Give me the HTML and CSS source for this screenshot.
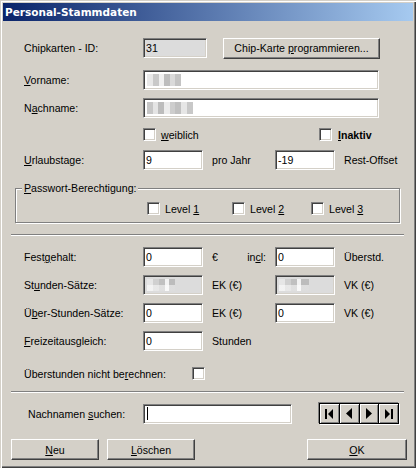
FILE: index.html
```html
<!DOCTYPE html>
<html>
<head>
<meta charset="utf-8">
<link rel="stylesheet" href="styles.css">
</head>
<body>
<div class="window">
  <div class="titlebar">Personal-Stammdaten</div>
  <div class="client">
    <div class="row r-chip">
      <span class="lbl">Chipkarten - ID:</span>
      <div class="field disabled w64">31</div>
      <button class="btn btn-chip">Chip-Karte <u>p</u>rogrammieren...</button>
    </div>
    <div class="row r-vor">
      <span class="lbl"><u>V</u>orname:</span>
      <div class="field w236"><span class="mosaic m-vor"></span></div>
    </div>
    <div class="row r-nach">
      <span class="lbl">N<u>a</u>chname:</span>
      <div class="field w236"><span class="mosaic m-nach"></span></div>
    </div>
    <div class="row r-check">
      <span class="lbl"></span>
      <div class="chk chk-weib"><span class="cb"></span><span><u>w</u>eiblich</span></div>
      <div class="chk"><span class="cb"></span><b><u>I</u>naktiv</b></div>
    </div>
    <div class="row r-url">
      <span class="lbl"><u>U</u>rlaubstage:</span>
      <div class="field w60">9</div>
      <div class="unit">pro Jahr</div>
      <div class="field w60">-19</div>
      <div class="unit2">Rest-Offset</div>
    </div>
    <fieldset class="group">
      <legend><u>P</u>asswort-Berechtigung:</legend>
      <div class="levels">
        <div class="chk lv1"><span class="cb"></span><span>Level <u>1</u></span></div>
        <div class="chk lv2"><span class="cb"></span><span>Level <u>2</u></span></div>
        <div class="chk"><span class="cb"></span><span>Level <u>3</u></span></div>
      </div>
    </fieldset>
    <div class="sep sep1"></div>
    <div class="row r-fest">
      <span class="lbl">Fest<u>g</u>ehalt:</span>
      <div class="field w60">0</div>
      <div class="unit split"><span>€</span><span>in<u>c</u>l:</span></div>
      <div class="field w60">0</div>
      <div class="unit2">Überstd.</div>
    </div>
    <div class="row r-std">
      <span class="lbl">St<u>u</u>nden-Sätze:</span>
      <div class="field w60 disabled"><span class="mosaic m-ek"></span></div>
      <div class="unit">EK (€)</div>
      <div class="field w60 disabled"><span class="mosaic m-vk"></span></div>
      <div class="unit2">VK (€)</div>
    </div>
    <div class="row r-ueb">
      <span class="lbl">Ü<u>b</u>er-Stunden-Sätze:</span>
      <div class="field w60">0</div>
      <div class="unit">EK (€)</div>
      <div class="field w60">0</div>
      <div class="unit2">VK (€)</div>
    </div>
    <div class="row r-frei">
      <span class="lbl"><u>F</u>reizeitausgleich:</span>
      <div class="field w60">0</div>
      <div class="unit">Stunden</div>
    </div>
    <div class="row r-nob">
      <span class="lbl lbl-wide">Überstunden nicht be<u>r</u>echnen:</span>
      <span class="cb"></span>
    </div>
    <div class="sep sep2"></div>
    <div class="row r-search">
      <span class="lbl lbl-search">Nachnamen <u>s</u>uchen:</span>
      <div class="field w149"><span class="caret"></span></div>
      <div class="nav">
        <div class="navbtn"><svg width="9" height="10" viewBox="0 0 9 10"><rect x="0" y="0" width="2" height="10" fill="#000"/><polygon points="8,0 8,10 3,5" fill="#000"/></svg></div>
        <div class="navbtn"><svg width="6" height="11" viewBox="0 0 6 11"><polygon points="6,0 6,11 0,5.5" fill="#000"/></svg></div>
        <div class="navbtn"><svg width="6" height="11" viewBox="0 0 6 11"><polygon points="0,0 0,11 6,5.5" fill="#000"/></svg></div>
        <div class="navbtn"><svg width="9" height="10" viewBox="0 0 9 10"><polygon points="1,0 1,10 6,5" fill="#000"/><rect x="7" y="0" width="2" height="10" fill="#000"/></svg></div>
      </div>
    </div>
    <div class="row r-btns">
      <button class="btn btn-sm"><u>N</u>eu</button>
      <button class="btn btn-sm btn-del"><u>L</u>öschen</button>
      <button class="btn btn-ok"><u>O</u>K</button>
    </div>
  </div>
</div>
</body>
</html>
```

FILE: styles.css
```css
* { box-sizing: border-box; }
html, body { margin: 0; padding: 0; }
body {
  background: #d4d0c8;
  font-family: "Liberation Sans", Arial, sans-serif;
  font-size: 10.6px;
  color: #000;
}
u { text-decoration: underline; text-underline-offset: 1px; }

.window {
  width: 416px;
  height: 468px;
  padding: 3px;
  background: #d4d0c8;
  box-shadow: inset 1px 1px 0 #d4d0c8, inset 2px 2px 0 #fff,
              inset -1px -1px 0 #404040, inset -2px -2px 0 #808080;
}
.titlebar {
  height: 18px;
  line-height: 18px;
  padding-left: 2px;
  background: linear-gradient(90deg, #0a246a, #a6caf0);
  color: #fff;
  font-family: "DejaVu Sans", Verdana, sans-serif;
  font-weight: bold;
  font-size: 10.5px;
}
.client { display: flex; flex-direction: column; }

.row {
  display: flex;
  align-items: center;
  height: 20px;
  padding-left: 21px;
}
.lbl { width: 119px; flex: none; }
.lbl-wide { width: 168px; }
.lbl-search { width: 115px; margin-left: 4px; }

.r-chip { margin-top: 17px; }
.r-vor { margin-top: 12px; }
.r-nach { margin-top: 8px; }
.r-check { margin-top: 10px; height: 13px; }
.r-url { margin-top: 9px; }
.r-fest { margin-top: 11px; }
.r-std, .r-ueb, .r-frei { margin-top: 8px; }
.r-nob { margin-top: 16px; height: 13px; }
.r-search { margin-top: 10px; height: 21px; }
.r-btns { margin-top: 15px; height: 21px; padding-left: 8px; }

.field {
  height: 20px;
  flex: none;
  display: flex;
  align-items: center;
  padding-left: 2px;
  background: #fff;
  border: 1px solid;
  border-color: #808080 #fff #fff #808080;
  box-shadow: inset 1px 1px 0 #404040, inset -1px -1px 0 #d4d0c8;
}
.field.disabled { background: #dcdcdc; }
.w60 { width: 60px; }
.w64 { width: 64px; }
.w236 { width: 236px; }
.w149 { width: 149px; }

.unit { width: 72px; padding-left: 9px; flex: none; }
.unit.split { display: flex; justify-content: space-between; padding-right: 9px; }
.unit2 { margin-left: 9px; }

.btn {
  height: 21px;
  flex: none;
  padding: 0;
  margin: 0;
  font: inherit;
  color: #000;
  background: #d4d0c8;
  border: 1px solid;
  border-color: #fff #404040 #404040 #fff;
  box-shadow: inset -1px -1px 0 #808080;
}
.btn-chip { width: 157px; margin-left: 16px; }
.btn-sm { width: 88px; }
.btn-del { margin-left: 8px; }
.btn-ok { width: 100px; margin-left: 112px; }

.cb {
  width: 13px;
  height: 13px;
  flex: none;
  background: #fff;
  border: 1px solid;
  border-color: #808080 #fff #fff #808080;
  box-shadow: inset 1px 1px 0 #404040, inset -1px -1px 0 #d4d0c8;
}
.chk { display: flex; align-items: center; gap: 5px; }
.chk-weib { width: 176px; }
.chk b { margin-left: 1px; }

.group {
  margin: 0 0 0 12px;
  width: 385px;
  height: 41px;
  padding: 7px 0 6px 0;
  margin-top: 12px;
  border: 1px solid #808080;
  box-shadow: inset 1px 1px 0 #fff, 1px 1px 0 #fff;
}
.group legend {
  margin-left: 6px;
  padding: 0 2px;
  line-height: 13px;
  height: 13px;
  background: #d4d0c8;
}
.levels { display: flex; align-items: center; height: 13px; padding-left: 131px; }
.lv1 { width: 85px; }
.lv2 { width: 79px; }

.sep {
  margin-left: 8px;
  width: 393px;
  height: 2px;
  border-top: 1px solid #808080;
  border-bottom: 1px solid #fff;
}
.sep1 { margin-top: 11px; }
.sep2 { margin-top: 11px; }

.mosaic { display: inline-block; height: 12px; margin-left: 1px; }
.m-vor {
  width: 34px;
  background:
    linear-gradient(90deg, #e8e8e8 0 6px, #c9c9c9 6px 12px, #f0f0f0 12px 17px, #bdbdbd 17px 23px, #dadada 23px 28px, #c4c4c4 28px 34px);
}
.m-nach {
  width: 46px;
  background:
    linear-gradient(90deg, #c6c6c6 0 6px, #e4e4e4 6px 11px, #bcbcbc 11px 17px, #ececec 17px 23px, #cdcdcd 23px 28px, #c0c0c0 28px 34px, #e6e6e6 34px 40px, #c8c8c8 40px 46px);
}
.m-ek, .m-vk {
  width: 28px;
  background:
    linear-gradient(180deg, transparent 0 6px, rgba(255,255,255,0.5) 6px 12px),
    linear-gradient(90deg, #e6e6e6 0 6px, #d0d0d0 6px 12px, #c0c0c0 12px 18px, #f2f2f2 18px 22px, #bcbcbc 22px 28px);
}
.m-vk { width: 30px; }

.caret { display: inline-block; width: 1px; height: 13px; background: #000; margin-left: 1px; }

.nav {
  display: flex;
  width: 80px;
  height: 21px;
  margin-left: 27px;
  border: 1px solid #000;
  box-shadow: -1px -1px 0 #808080, 1px 1px 0 #fff;
}
.navbtn {
  flex: 1;
  display: flex;
  align-items: center;
  justify-content: center;
  background: #d4d0c8;
  box-shadow: inset 1px 1px 0 #fff, inset -1px -1px 0 #808080;
}
.navbtn + .navbtn { border-left: 1px solid #000; }
```
